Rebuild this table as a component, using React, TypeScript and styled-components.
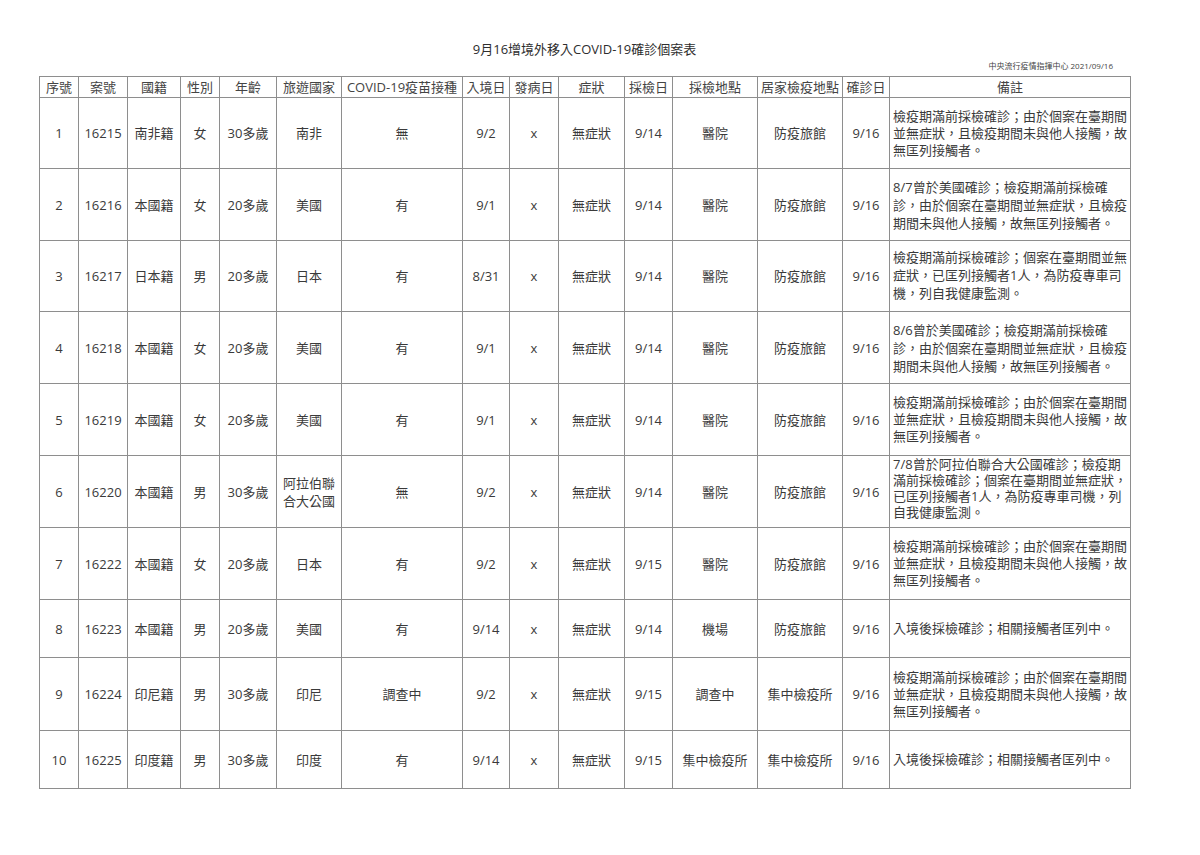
import React from "react";
import styled, { createGlobalStyle } from "styled-components";

const GlobalStyle = createGlobalStyle`
  html, body { margin: 0; padding: 0; background: #ffffff; }
  body { font-family: "Open Sans", "Noto Sans CJK TC", sans-serif; color: #3a3a3a; }
`;

const Page = styled.div`
  width: 1200px;
  height: 855px;
  box-sizing: border-box;
  padding: 40px 0 0 39px;
  display: flex;
  flex-direction: column;
  font-family: "Open Sans", "Noto Sans CJK TC", sans-serif;
`;

const Header = styled.div`
  width: 1091px;
  display: flex;
  flex-direction: column;
`;

const Title = styled.div`
  font-size: 13px;
  line-height: 18px;
  text-align: center;
  color: #2e2e2e;
`;

const Source = styled.div`
  font-size: 8px;
  line-height: 10px;
  text-align: right;
  padding-right: 17px;
  margin-top: 3px;
  margin-bottom: 5px;
  color: #444;
`;

const Sheet = styled.table`
  border-collapse: collapse;
  table-layout: fixed;
  width: 1091px;
  font-size: 13px;
  color: #3a3a3a;
`;

const HeadCell = styled.th`
  border: 1px solid #8e8e8e;
  font-weight: normal;
  padding: 0;
  text-align: center;
  vertical-align: middle;
  white-space: nowrap;
  line-height: 18px;
  color: #444;
`;

const Row = styled.tr<{ $h: number }>`
  height: ${(p) => p.$h}px;
`;

const Cell = styled.td`
  border: 1px solid #8e8e8e;
  padding: 0 2px;
  text-align: center;
  vertical-align: middle;
  line-height: 18px;
  white-space: nowrap;
`;

const NoteCell = styled.td<{ $lh: number; $top?: boolean }>`
  border: 1px solid #8e8e8e;
  padding: 0 2px 0 3px;
  text-align: left;
  vertical-align: ${(p) => (p.$top ? "top" : "middle")};
  line-height: ${(p) => p.$lh}px;
  white-space: nowrap;
  overflow: hidden;
`;

const NoteLine = styled.span`
  display: block;
`;

const widths = [39, 49, 53, 39, 57, 65, 121, 47, 49, 66, 48, 85, 85, 47, 241];

const heads = [
  "序號",
  "案號",
  "國籍",
  "性別",
  "年齡",
  "旅遊國家",
  "COVID-19疫苗接種",
  "入境日",
  "發病日",
  "症狀",
  "採檢日",
  "採檢地點",
  "居家檢疫地點",
  "確診日",
  "備註",
];

const noteA = [
  "檢疫期滿前採檢確診；由於個案在臺期間",
  "並無症狀，且檢疫期間未與他人接觸，故",
  "無匡列接觸者。",
];
const noteB = ["入境後採檢確診；相關接觸者匡列中。"];

type Case = {
  h: number;
  lh: number;
  top?: boolean;
  cells: string[][];
  note: string[];
};

const rows: Case[] = [
  {
    h: 71,
    lh: 17,
    cells: [["1"], ["16215"], ["南非籍"], ["女"], ["30多歲"], ["南非"], ["無"], ["9/2"], ["x"], ["無症狀"], ["9/14"], ["醫院"], ["防疫旅館"], ["9/16"]],
    note: noteA,
  },
  {
    h: 72,
    lh: 18,
    cells: [["2"], ["16216"], ["本國籍"], ["女"], ["20多歲"], ["美國"], ["有"], ["9/1"], ["x"], ["無症狀"], ["9/14"], ["醫院"], ["防疫旅館"], ["9/16"]],
    note: [
      "8/7曾於美國確診；檢疫期滿前採檢確",
      "診，由於個案在臺期間並無症狀，且檢疫",
      "期間未與他人接觸，故無匡列接觸者。",
    ],
  },
  {
    h: 71,
    lh: 17.8,
    cells: [["3"], ["16217"], ["日本籍"], ["男"], ["20多歲"], ["日本"], ["有"], ["8/31"], ["x"], ["無症狀"], ["9/14"], ["醫院"], ["防疫旅館"], ["9/16"]],
    note: [
      "檢疫期滿前採檢確診；個案在臺期間並無",
      "症狀，已匡列接觸者1人，為防疫專車司",
      "機，列自我健康監測。",
    ],
  },
  {
    h: 72,
    lh: 18,
    cells: [["4"], ["16218"], ["本國籍"], ["女"], ["20多歲"], ["美國"], ["有"], ["9/1"], ["x"], ["無症狀"], ["9/14"], ["醫院"], ["防疫旅館"], ["9/16"]],
    note: [
      "8/6曾於美國確診；檢疫期滿前採檢確",
      "診，由於個案在臺期間並無症狀，且檢疫",
      "期間未與他人接觸，故無匡列接觸者。",
    ],
  },
  {
    h: 72,
    lh: 17,
    cells: [["5"], ["16219"], ["本國籍"], ["女"], ["20多歲"], ["美國"], ["有"], ["9/1"], ["x"], ["無症狀"], ["9/14"], ["醫院"], ["防疫旅館"], ["9/16"]],
    note: noteA,
  },
  {
    h: 72,
    lh: 16,
    top: true,
    cells: [["6"], ["16220"], ["本國籍"], ["男"], ["30多歲"], ["阿拉伯聯", "合大公國"], ["無"], ["9/2"], ["x"], ["無症狀"], ["9/14"], ["醫院"], ["防疫旅館"], ["9/16"]],
    note: [
      "7/8曾於阿拉伯聯合大公國確診；檢疫期",
      "滿前採檢確診；個案在臺期間並無症狀，",
      "已匡列接觸者1人，為防疫專車司機，列",
      "自我健康監測。",
    ],
  },
  {
    h: 72,
    lh: 17,
    cells: [["7"], ["16222"], ["本國籍"], ["女"], ["20多歲"], ["日本"], ["有"], ["9/2"], ["x"], ["無症狀"], ["9/15"], ["醫院"], ["防疫旅館"], ["9/16"]],
    note: noteA,
  },
  {
    h: 58,
    lh: 17,
    cells: [["8"], ["16223"], ["本國籍"], ["男"], ["20多歲"], ["美國"], ["有"], ["9/14"], ["x"], ["無症狀"], ["9/14"], ["機場"], ["防疫旅館"], ["9/16"]],
    note: noteB,
  },
  {
    h: 73,
    lh: 17,
    cells: [["9"], ["16224"], ["印尼籍"], ["男"], ["30多歲"], ["印尼"], ["調查中"], ["9/2"], ["x"], ["無症狀"], ["9/15"], ["調查中"], ["集中檢疫所"], ["9/16"]],
    note: noteA,
  },
  {
    h: 58,
    lh: 17,
    cells: [["10"], ["16225"], ["印度籍"], ["男"], ["30多歲"], ["印度"], ["有"], ["9/14"], ["x"], ["無症狀"], ["9/15"], ["集中檢疫所"], ["集中檢疫所"], ["9/16"]],
    note: noteB,
  },
];

export default function App() {
  return (
    <>
      <GlobalStyle />
      <Page lang="zh-TW">
        <Header>
          <Title>9月16增境外移入COVID-19確診個案表</Title>
          <Source>中央流行疫情指揮中心 2021/09/16</Source>
        </Header>
        <Sheet>
          <colgroup>
            {widths.map((w, i) => (
              <col key={i} style={{ width: w }} />
            ))}
          </colgroup>
          <thead>
            <Row $h={21}>
              {heads.map((h) => (
                <HeadCell key={h}>{h}</HeadCell>
              ))}
            </Row>
          </thead>
          <tbody>
            {rows.map((r, ri) => (
              <Row key={ri} $h={r.h}>
                {r.cells.map((c, ci) => (
                  <Cell key={ci}>
                    {c.map((line, li) => (
                      <React.Fragment key={li}>
                        {li > 0 && <br />}
                        {line}
                      </React.Fragment>
                    ))}
                  </Cell>
                ))}
                <NoteCell $lh={r.lh} $top={r.top}>
                  {r.note.map((line, li) => (
                    <NoteLine key={li}>{line}</NoteLine>
                  ))}
                </NoteCell>
              </Row>
            ))}
          </tbody>
        </Sheet>
      </Page>
    </>
  );
}
